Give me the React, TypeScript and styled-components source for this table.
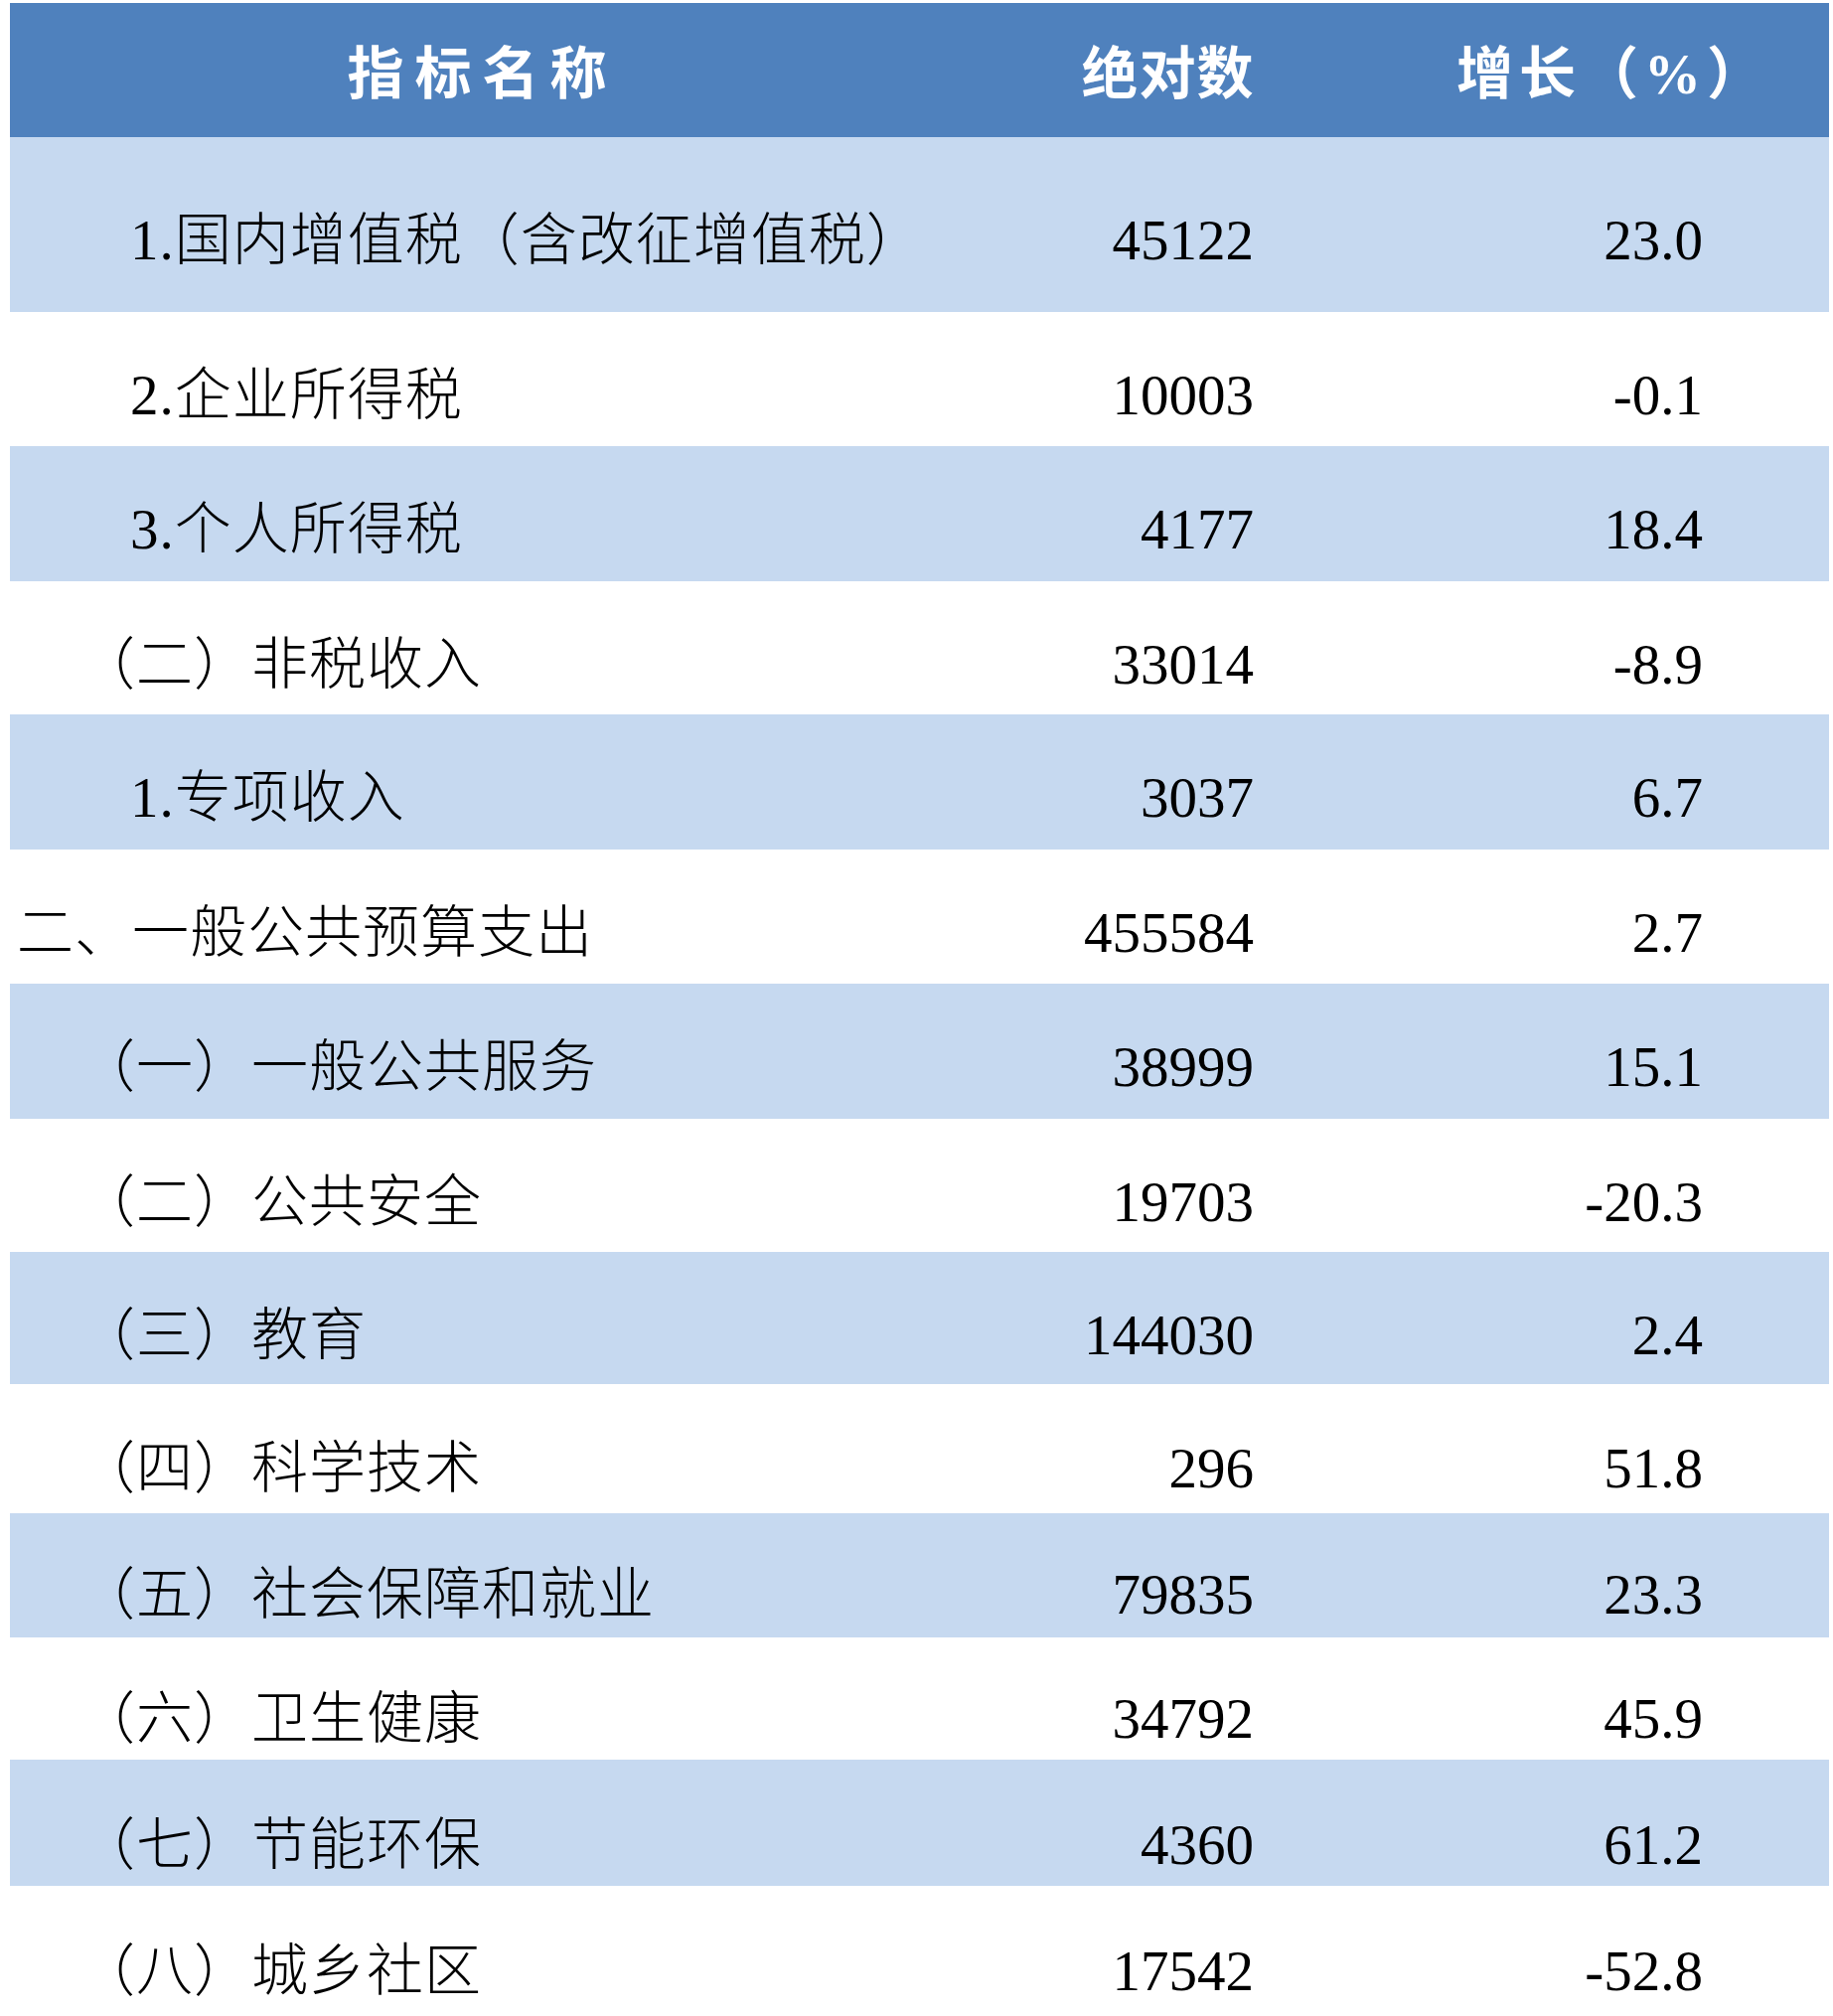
import React from "react";
import styled, { createGlobalStyle } from "styled-components";

const GlobalStyle = createGlobalStyle`
  html, body {
    margin: 0;
    padding: 0;
    background: #ffffff;
  }
  body {
    font-family: "Liberation Serif", "Noto Sans CJK SC", serif;
  }
`;

type Item = {
  label: string;
  level: 0 | 1 | 2;
  value: string;
  pct: string;
  height: number;
  top: number;
};

const rows: Item[] = [
  { label: "1.国内增值税（含改征增值税）", level: 2, value: "45122", pct: "23.0", height: 176, top: 75 },
  { label: "2.企业所得税", level: 2, value: "10003", pct: "-0.1", height: 135, top: 55 },
  { label: "3.个人所得税", level: 2, value: "4177", pct: "18.4", height: 136, top: 55 },
  { label: "（二）非税收入", level: 1, value: "33014", pct: "-8.9", height: 134, top: 55 },
  { label: "1.专项收入", level: 2, value: "3037", pct: "6.7", height: 136, top: 55 },
  { label: "二、一般公共预算支出", level: 0, value: "455584", pct: "2.7", height: 135, top: 55 },
  { label: "（一）一般公共服务", level: 1, value: "38999", pct: "15.1", height: 136, top: 55 },
  { label: "（二）公共安全", level: 1, value: "19703", pct: "-20.3", height: 134, top: 55 },
  { label: "（三）教育", level: 1, value: "144030", pct: "2.4", height: 133, top: 55 },
  { label: "（四）科学技术", level: 1, value: "296", pct: "51.8", height: 130, top: 56 },
  { label: "（五）社会保障和就业", level: 1, value: "79835", pct: "23.3", height: 125, top: 53 },
  { label: "（六）卫生健康", level: 1, value: "34792", pct: "45.9", height: 123, top: 53 },
  { label: "（七）节能环保", level: 1, value: "4360", pct: "61.2", height: 127, top: 57 },
  { label: "（八）城乡社区", level: 1, value: "17542", pct: "-52.8", height: 127, top: 57 },
];

const indent = [7, 69, 121];

const Page = styled.div`
  padding: 3px 4px 0 10px;
  width: 1831px;
`;

const Table = styled.div`
  display: flex;
  flex-direction: column;
  width: 1831px;
`;

const HeaderRow = styled.div`
  display: grid;
  grid-template-columns: 940px 450px 441px;
  height: 135px;
  background: #4f81bd;
  color: #ffffff;
`;

const HeaderCell = styled.div<{ $spacing: number }>`
  display: flex;
  align-items: center;
  justify-content: center;
  padding-top: 8px;
  padding-left: ${(p) => p.$spacing}px;
  font-family: "Liberation Serif", "Noto Sans CJK SC", serif;
  font-weight: 700;
  font-size: 57px;
  line-height: 57px;
  letter-spacing: ${(p) => p.$spacing}px;
  white-space: nowrap;
`;

const BodyRow = styled.div<{ $shade: boolean; $h: number; $top: number }>`
  display: grid;
  grid-template-columns: 940px 450px 441px;
  align-items: start;
  height: ${(p) => p.$h}px;
  padding-top: ${(p) => p.$top}px;
  box-sizing: border-box;
  background: ${(p) => (p.$shade ? "#c6d9f0" : "#ffffff")};
  color: #000000;
  font-family: "Liberation Serif", "Noto Sans CJK SC", serif;
  font-weight: 300;
  font-size: 57px;
  line-height: 57px;
`;

const NameCell = styled.div<{ $level: number }>`
  padding-left: ${(p) => indent[p.$level]}px;
  letter-spacing: 1px;
  white-space: nowrap;
`;

const NumCell = styled.div<{ $right: number }>`
  text-align: right;
  padding-right: ${(p) => p.$right}px;
  font-weight: 400;
  white-space: nowrap;
`;

export default function App() {
  return (
    <>
      <GlobalStyle />
      <Page>
        <Table>
          <HeaderRow>
            <HeaderCell $spacing={11}>指标名称</HeaderCell>
            <HeaderCell $spacing={1}>绝对数</HeaderCell>
            <HeaderCell $spacing={6}>增长（%）</HeaderCell>
          </HeaderRow>
          {rows.map((r, i) => (
            <BodyRow key={i} $shade={i % 2 === 0} $h={r.height} $top={r.top}>
              <NameCell $level={r.level}>{r.label}</NameCell>
              <NumCell $right={138}>{r.value}</NumCell>
              <NumCell $right={127}>{r.pct}</NumCell>
            </BodyRow>
          ))}
        </Table>
      </Page>
    </>
  );
}
